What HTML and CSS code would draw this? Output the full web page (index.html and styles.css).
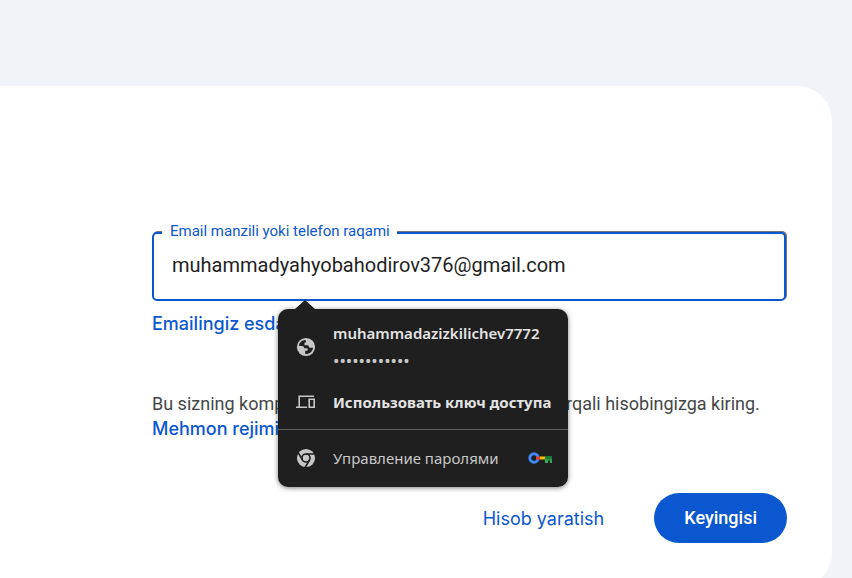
FILE: index.html
```html
<!DOCTYPE html>
<html lang="uz">
<head>
<meta charset="utf-8">
<meta name="viewport" content="width=device-width, initial-scale=1">
<title>Kirish</title>
<link rel="stylesheet" href="styles.css">
</head>
<body>
<main class="card">
  <form class="signin">
    <div class="field">
      <input class="field-input" id="identifier" type="text" value="muhammadyahyobahodirov376@gmail.com" autocomplete="off" spellcheck="false">
      <label class="field-label" for="identifier">Email manzili yoki telefon raqami</label>
      <div class="popup" lang="ru">
        <button class="popup-row account" type="button">
          <svg class="icon" viewBox="0 0 20 20" aria-hidden="true">
            <circle cx="10" cy="10" r="9.1" fill="#c7c7c7"/>
            <path fill="#1f1f1f" d="M9.1 3 C6 3.2 3.2 5.6 2.9 8.8 L6 9.1 C7.8 9.1 8.2 10.2 8.2 11.2 L11 11.3 C12 11.5 12.1 13 11.2 13.7 H9.2 V17 C13.4 17.4 16.8 14.2 17 10.7 H14.2 C12.6 10.7 12.6 9.2 12.4 8.3 H8.5 V6.3 C8.5 5.6 9.1 5.3 10 5.3 V4.1 Z"/>
          </svg>
          <span class="lines"><span class="strong">muhammadazizkilichev7772</span><span class="dots">••••••••••••</span></span>
        </button>
        <button class="popup-row passkey" type="button">
          <svg class="icon" viewBox="0 0 20 20" aria-hidden="true">
            <path fill="none" stroke="#c7c7c7" stroke-width="1.6" d="M18 4.3 H3.2 V14.5 M0 15.2 H11 M13.2 7.3 H18.2 V15.2 H13.2 Z"/>
          </svg>
          <span class="strong">Использовать ключ доступа</span>
        </button>
        <button class="popup-row manage" type="button">
          <svg class="icon" viewBox="0 0 20 20" aria-hidden="true">
            <circle cx="10" cy="10" r="9.1" fill="#c7c7c7"/>
            <circle cx="10" cy="10" r="4" fill="none" stroke="#1f1f1f" stroke-width="1.6"/>
            <path fill="none" stroke="#1f1f1f" stroke-width="1.6" d="M10 6 H18.5 M6.5 12 L2.2 4.6 M13.5 12 L9.2 19.4"/>
          </svg>
          <span class="plain">Управление паролями</span>
          <svg class="key" viewBox="0 0 24 12" aria-hidden="true">
            <circle cx="6" cy="6" r="4.2" fill="none" stroke="#4285f4" stroke-width="3"/>
            <path fill="#ea4335" d="M8 4.5h4v3H8z"/>
            <path fill="#fbbc04" d="M12 4.5h5v3h-5z"/>
            <path fill="#34a853" d="M17 4.5h7V11h-2V8.5h-2V11h-3z"/>
            <path fill="#188038" d="M17 4.5h7v3h-7z"/>
          </svg>
        </button>
      </div>
    </div>
    <a class="link forgot" href="#">Emailingiz esdan chiqdimi?</a>
    <p class="note">Bu sizning kompyuteringiz emasmi? Maxsus rejim orqali hisobingizga kiring.</p>
    <a class="link" href="#">Mehmon rejimidan foydalanish</a>
    <div class="actions">
      <a class="create" href="#">Hisob yaratish</a>
      <button class="next" type="submit">Keyingisi</button>
    </div>
  </form>
</main>
</body>
</html>
```
FILE: styles.css
```css
* { box-sizing: border-box; }

body {
  margin: 0;
  height: 100vh;
  overflow: hidden;
  background: #f0f4f9;
  color: #444746;
  font-family: Roboto, "Liberation Sans", sans-serif;
  font-size: 18px;
  line-height: 25px;
}

.card {
  margin: 86px 20px 0 0;
  padding: 146px 45px 45px 152px;
  background: #fff;
  border-radius: 0 35px 35px 0;
}

.signin {
  display: flex;
  flex-direction: column;
  align-items: flex-start;
}

.field {
  position: relative;
  width: 100%;
  padding-right: 1px;
}

.field-input {
  display: block;
  width: 100%;
  height: 69px;
  padding: 0 18px 4px;
  border: 2px solid #0b57d0;
  border-radius: 5px;
  box-shadow: 1px -1px 0 #747775;
  outline: none;
  background: #fff;
  color: #1f1f1f;
  font: 400 20px Roboto, sans-serif;
}

.field-label {
  position: absolute;
  top: -11px;
  left: 10px;
  padding: 0 7px 0 8px;
  background: #fff;
  color: #0b57d0;
  font-size: 15px;
  line-height: 20px;
}

.link {
  color: #0b57d0;
  font-family: Inter, sans-serif;
  font-weight: 500;
  text-decoration: none;
  white-space: nowrap;
}

.forgot { margin-top: 10px; }

.note {
  margin: 55px 0 0;
  white-space: nowrap;
}

.actions {
  display: flex;
  align-self: flex-end;
  align-items: center;
  gap: 50px;
  margin-top: 52px;
}

.create {
  color: #0b57d0;
  font-family: Inter, sans-serif;
  text-decoration: none;
}

.next {
  height: 50px;
  padding: 0 30px 2px;
  border: 0;
  border-radius: 25px;
  background: #0b57d0;
  color: #fff;
  font: 500 18px Roboto, sans-serif;
}

.popup {
  position: absolute;
  z-index: 1;
  top: calc(100% + 8px);
  left: 126px;
  width: 290px;
  border-radius: 10px;
  background: #1f1f1f;
  box-shadow: 0 1px 5px rgba(0, 0, 0, 0.5);
}

.popup::before {
  content: "";
  position: absolute;
  bottom: 100%;
  left: 17px;
  border: solid transparent;
  border-width: 0 10px 9px;
  border-bottom-color: #1f1f1f;
}

.popup-row {
  display: flex;
  align-items: center;
  gap: 17px;
  width: 100%;
  padding: 0 16px 0 18px;
  border: 0;
  background: none;
  color: #e3e3e3;
  font: 15px/28px "Noto Sans", sans-serif;
  text-align: left;
  white-space: nowrap;
}

.account { height: 75px; }
.passkey { height: 45px; padding-bottom: 10px; }
.manage { height: 58px; padding-bottom: 2px; border-top: 1px solid #5f6163; }

.lines {
  display: flex;
  flex-direction: column;
}

.strong { font-weight: 600; }
.passkey .strong { font-weight: 700; }
.plain { flex: 1; color: #c7c7c7; }
.dots { color: #c7c7c7; font-size: 17px; }

.icon {
  flex: none;
  width: 20px;
  height: 20px;
}

.key {
  flex: none;
  width: 24px;
  height: 12px;
}
```
